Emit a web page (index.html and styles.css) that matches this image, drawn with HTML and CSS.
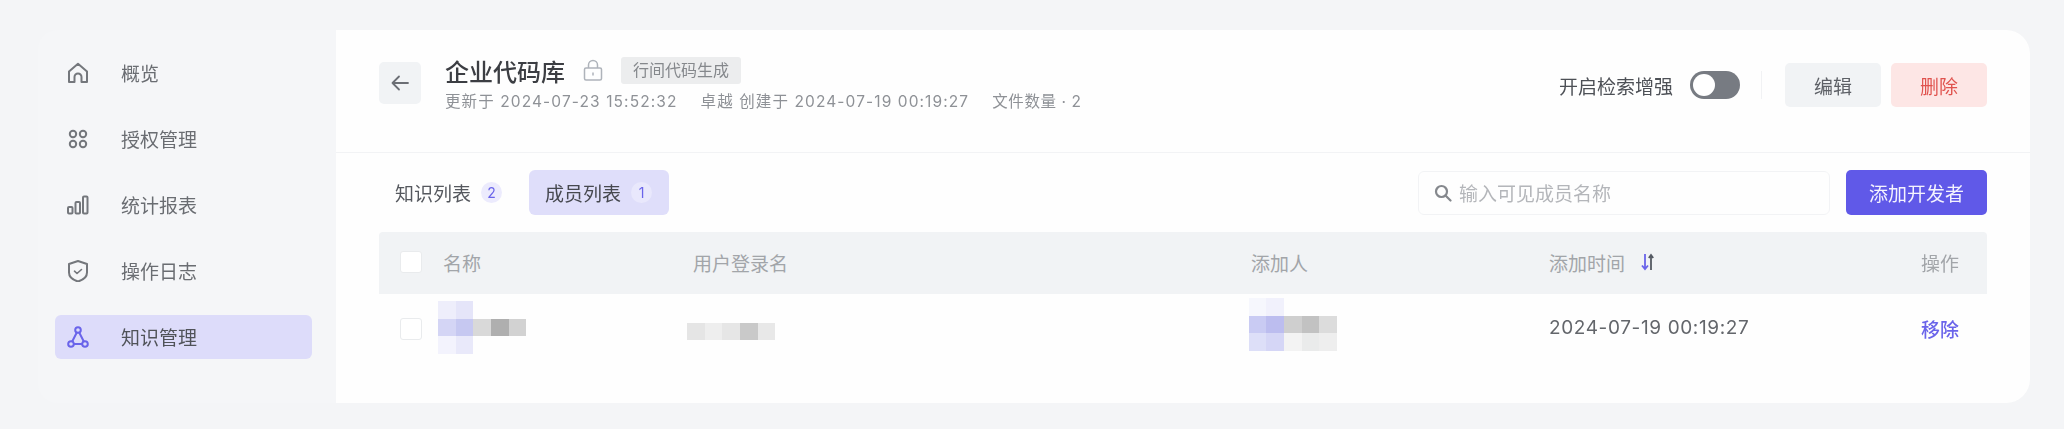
FILE: index.html
```html
<!DOCTYPE html>
<html lang="zh-CN">
<head>
    <meta charset="UTF-8">
    <meta name="viewport" content="width=device-width, initial-scale=1.0">
    <title>企业代码库</title>
    <link rel="stylesheet" href="styles.css">
</head>
<body>
    <div class="app">
        <aside class="sidebar">
            <div class="nav-item">
                <svg class="nav-icon" viewBox="0 0 22 22" fill="none" stroke="currentColor" stroke-width="2" stroke-linejoin="round"><path d="M2 9.500 11 1.800l9 7.700V20h-5.500v-5a3.500 3.500 0 0 0-7 0v5H2z"/></svg>
                <span>概览</span>
            </div>
            <div class="nav-item">
                <svg class="nav-icon" viewBox="0 0 22 22" fill="none" stroke="currentColor" stroke-width="2"><circle cx="6" cy="6" r="3.200"/><circle cx="16" cy="6" r="3.200"/><circle cx="6" cy="16" r="3.200"/><circle cx="16" cy="16" r="3.200"/></svg>
                <span>授权管理</span>
            </div>
            <div class="nav-item">
                <svg class="nav-icon" viewBox="0 0 22 22" fill="none" stroke="currentColor" stroke-width="2"><rect x="1" y="13" width="4.500" height="6.500" rx="1"/><rect x="8.500" y="8" width="4.500" height="11.500" rx="1"/><rect x="16" y="2.500" width="4.500" height="17" rx="1"/></svg>
                <span>统计报表</span>
            </div>
            <div class="nav-item">
                <svg class="nav-icon" viewBox="0 0 22 22" fill="none" stroke="currentColor" stroke-width="2" stroke-linejoin="round" stroke-linecap="round"><path d="M11 1 20 4v8.500c0 4.500-4 7.500-9 9-5-1.500-9-4.500-9-9V4z"/><path d="m7.500 11.200 2.500 2.300 4.500-4" stroke-width="1.600"/></svg>
                <span>操作日志</span>
            </div>
            <div class="nav-item nav-item-active">
                <svg class="nav-icon" viewBox="0 0 22 22" fill="none" stroke="currentColor" stroke-width="2"><circle cx="11" cy="4" r="2.800"/><circle cx="4" cy="18" r="2.800"/><circle cx="18" cy="18" r="2.800"/><path d="M9.800 6.500 5.200 15.500M12.200 6.500l4.600 9M6.800 18h8.400"/></svg>
                <span>知识管理</span>
            </div>
        </aside>

        <main class="panel">
            <header class="panel-head">
                <button class="back-button">
                    <svg viewBox="0 0 20 20" fill="none" stroke="currentColor" stroke-width="1.800" stroke-linecap="round" stroke-linejoin="round"><path d="M18 10H2.500M9 3.500 2.500 10 9 16.500"/></svg>
                </button>
                <div class="title-block">
                    <div class="title-row">
                        <span class="title">企业代码库</span>
                        <svg class="lock-icon" viewBox="0 0 20 22" fill="none" stroke="currentColor" stroke-width="1.500"><rect x="1.500" y="9" width="17" height="12" rx="1.500"/><path d="M5.500 9V6a4.500 4.500 0 0 1 9 0v3M10 13.500v3"/></svg>
                        <span class="tag">行间代码生成</span>
                    </div>
                    <div class="meta-row">
                        <span class="meta-time">更新于 2024-07-23 15:52:32</span>
                        <span class="meta-time">卓越 创建于 2024-07-19 00:19:27</span>
                        <span>文件数量 · 2</span>
                    </div>
                </div>
                <div class="head-actions">
                    <span class="toggle-label">开启检索增强</span>
                    <span class="toggle"></span>
                    <span class="head-divider"></span>
                    <button class="btn btn-gray">编辑</button>
                    <button class="btn btn-red">删除</button>
                </div>
            </header>

            <div class="toolbar">
                <div class="tab">知识列表 <span class="tab-count">2</span></div>
                <div class="tab tab-active">成员列表 <span class="tab-count">1</span></div>
                <div class="search-box">
                    <svg class="search-icon" viewBox="0 0 18 18" fill="none" stroke="currentColor" stroke-width="2.200" stroke-linecap="round"><circle cx="7.500" cy="7.500" r="5.500"/><path d="m12 12 4.500 4.500"/></svg>
                    <span>输入可见成员名称</span>
                </div>
                <button class="btn btn-primary">添加开发者</button>
            </div>

            <div class="table">
                <div class="table-row table-head">
                    <span class="checkbox"></span>
                    <span>名称</span>
                    <span>用户登录名</span>
                    <span>添加人</span>
                    <span class="sort-cell">添加时间
                        <svg class="sort-icon" viewBox="0 0 14 18" fill="none" stroke-width="1.800"><path d="M4 1v15M1 12.500 4 16l3-3.500" stroke="#6a64ea"/><path d="M10 17V2M7.800 5 10 2l2.200 3" stroke="#555a63"/></svg>
                    </span>
                    <span class="cell-op">操作</span>
                </div>
                <div class="table-row table-body">
                    <span class="checkbox"></span>
                    <svg class="mosaic mosaic-name" width="88" height="53" viewBox="0 0 88 53">
                        <rect x="0" y="0" width="18" height="18" fill="#eeeefb"/><rect x="18" y="0" width="17" height="18" fill="#e5e5f9"/>
                        <rect x="0" y="18" width="18" height="17" fill="#d4d5f5"/><rect x="18" y="18" width="17" height="17" fill="#c6c8f1"/>
                        <rect x="35" y="18" width="18" height="17" fill="#d9d9d9"/><rect x="53" y="18" width="18" height="17" fill="#afafaf"/><rect x="71" y="18" width="17" height="17" fill="#d2d2d2"/>
                        <rect x="0" y="35" width="18" height="18" fill="#f3f3fd"/><rect x="18" y="35" width="17" height="18" fill="#e9e9fa"/>
                    </svg>
                    <svg class="mosaic mosaic-login" width="88" height="17" viewBox="0 0 88 17">
                        <rect x="0" y="0" width="18" height="17" fill="#e5e5e5"/><rect x="18" y="0" width="17" height="17" fill="#eeeeee"/><rect x="35" y="0" width="18" height="17" fill="#e6e6e6"/><rect x="53" y="0" width="18" height="17" fill="#c9c9c9"/><rect x="71" y="0" width="17" height="17" fill="#e8e8e8"/>
                    </svg>
                    <svg class="mosaic mosaic-adder" width="88" height="53" viewBox="0 0 88 53">
                        <rect x="0" y="0" width="17" height="18" fill="#f6f7fd"/><rect x="17" y="0" width="18" height="18" fill="#f1f1fc"/>
                        <rect x="0" y="18" width="17" height="17" fill="#c9cbf3"/><rect x="17" y="18" width="18" height="17" fill="#bcbdef"/>
                        <rect x="35" y="18" width="18" height="17" fill="#cfcfcf"/><rect x="53" y="18" width="17" height="17" fill="#c2c2c2"/><rect x="70" y="18" width="18" height="17" fill="#dcdcdc"/>
                        <rect x="0" y="35" width="17" height="18" fill="#dddff8"/><rect x="17" y="35" width="18" height="18" fill="#d5d6f6"/>
                        <rect x="35" y="35" width="18" height="18" fill="#f3f3f3"/><rect x="53" y="35" width="17" height="18" fill="#eaebeb"/><rect x="70" y="35" width="18" height="18" fill="#eeeeee"/>
                    </svg>
                    <span class="cell-time">2024-07-19 00:19:27</span>
                    <span class="cell-op cell-remove">移除</span>
                </div>
            </div>
        </main>
    </div>
</body>
</html>
```

FILE: styles.css
```css
/* Global Styles */
body {
    margin: 0;
    height: 429px;
    overflow: hidden;
    background: #f4f5f7;
    font-family: 'Inter', 'Noto Sans CJK SC', sans-serif;
    font-size: 19px;
    color: #55585e;
}

button {
    font-family: inherit;
    border: none;
    padding: 0;
}

.app {
    display: flex;
    width: 1992px;
    height: 373px;
    margin: 30px 0 0 38px;
}

/* Sidebar */
.sidebar {
    width: 298px;
    box-sizing: border-box;
    padding: 21px 24px 0 17px;
    display: flex;
    flex-direction: column;
    gap: 22px;
    background: #f5f6f8;
    border-radius: 20px 0 0 20px;
    filter: blur(0.6px);
}

.nav-item {
    height: 44px;
    display: flex;
    align-items: center;
    gap: 32px;
    padding-left: 12px;
    border-radius: 6px;
    color: #6a6d72;
    line-height: 24px;
}

.nav-item span {
    margin-top: 3px;
}

.nav-item-active {
    background: #dddcfa;
    color: #505359;
}

.nav-item-active .nav-icon {
    color: #6a64ea;
}

.nav-icon {
    width: 22px;
    height: 22px;
    color: #74777c;
}

/* Main panel */
.panel {
    flex: 1;
    background: #fefefe;
    border-radius: 0 24px 24px 0;
    overflow: hidden;
}

.panel-head {
    height: 123px;
    box-sizing: border-box;
    padding: 32px 43px 0;
    display: flex;
    align-items: flex-start;
    gap: 24px;
    border-bottom: 1px solid #f2f3f5;
    filter: blur(0.6px);
}

.back-button {
    width: 42px;
    height: 42px;
    border-radius: 5px;
    background: #f1f3f5;
    color: #6b6e74;
    display: flex;
    align-items: center;
    justify-content: center;
}

.back-button svg {
    width: 20px;
    height: 20px;
}

.title-block {
    display: flex;
    flex-direction: column;
    margin-top: -6px;
}

.title-row {
    display: flex;
    align-items: center;
    height: 28px;
}

.title {
    font-size: 24px;
    font-weight: 500;
    color: #3c3e43;
}

.lock-icon {
    width: 20px;
    height: 22px;
    margin-left: 18px;
    color: #aeb3ba;
}

.tag {
    margin-left: 18px;
    height: 27px;
    width: 120px;
    text-align: center;
    line-height: 27px;
    font-size: 16px;
    color: #85888c;
    background: #ecedee;
    border-radius: 3px;
}

.meta-row {
    display: flex;
    gap: 23px;
    margin-top: 7px;
    font-size: 15.5px;
    line-height: 22px;
    color: #8e9196;
    letter-spacing: 0.6px;
    white-space: nowrap;
}

.meta-time {
    letter-spacing: 1.1px;
}

.head-actions {
    margin-left: auto;
    display: flex;
    align-items: center;
    height: 44px;
    margin-top: 1px;
}

.toggle-label {
    color: #4d5056;
}

.toggle {
    width: 50px;
    height: 28px;
    margin-left: 17px;
    box-sizing: border-box;
    padding: 3px;
    border-radius: 14px;
    background: #777b82;
}

.toggle::before {
    content: "";
    display: block;
    width: 22px;
    height: 22px;
    border-radius: 50%;
    background: #fff;
}

.head-divider {
    width: 1px;
    height: 28px;
    margin: 0 23px 0 21px;
    background: #f1f2f4;
}

.btn {
    height: 44px;
    width: 96px;
    font-size: 19px;
    border-radius: 5px;
}

.btn-gray {
    background: #f1f3f5;
    color: #5d6066;
}

.btn-red {
    margin-left: 10px;
    background: #fde6e5;
    color: #e0534e;
}

.btn-primary {
    width: 141px;
    height: 45px;
    margin-left: 16px;
    background: #6059e8;
    color: #f4f3fe;
}

/* Tabs and search */
.toolbar {
    display: flex;
    align-items: center;
    height: 45px;
    padding: 0 43px;
    margin-top: 17px;
    filter: blur(0.6px);
}

.tab {
    display: flex;
    align-items: center;
    height: 45px;
    gap: 10px;
    padding: 0 16px;
    border-radius: 6px;
    color: #55585e;
    white-space: nowrap;
}

.tab-active {
    margin-left: 11px;
    padding-right: 17px;
    background: #dfdefa;
    color: #46484f;
}

.tab-count {
    width: 21px;
    height: 21px;
    border-radius: 50%;
    background: #ecebfd;
    color: #6a64ea;
    font-size: 14px;
    line-height: 21px;
    text-align: center;
}

.tab-active .tab-count {
    background: #e9e8fc;
}

.search-box {
    margin-left: auto;
    width: 412px;
    height: 44px;
    box-sizing: border-box;
    display: flex;
    align-items: center;
    gap: 7px;
    padding-left: 15px;
    border: 1px solid #f2f3f5;
    border-radius: 6px;
    color: #b4b6ba;
}

.search-icon {
    width: 18px;
    height: 18px;
    color: #85888d;
}

/* Table */
.table {
    margin: 17px 43px 0;
}

.table-row {
    display: grid;
    grid-template-columns: 64px 250px 558px 298px 1fr 100px;
    align-items: center;
}

.table-head {
    height: 62px;
    background: #f1f3f5;
    border-radius: 4px 4px 0 0;
    color: #a2a5a9;
    filter: blur(0.6px);
    padding-bottom: 2px;
    box-sizing: border-box;
}

.table-body {
    height: 70px;
}

.table-row .checkbox {
    width: 22px;
    height: 22px;
    box-sizing: border-box;
    margin-left: 21px;
    background: #fff;
    border: 1px solid #e9ebed;
    border-radius: 3px;
}

.sort-cell {
    display: flex;
    align-items: center;
    gap: 16px;
}

.sort-icon {
    width: 14px;
    height: 18px;
}

.cell-op {
    text-align: right;
    padding-right: 28px;
}

.cell-remove {
    color: #6a64ea;
    font-weight: 500;
    margin-top: -1px;
    filter: blur(0.6px);
}

.cell-time {
    color: #63666b;
    white-space: nowrap;
    letter-spacing: 0.62px;
    margin-top: -4px;
    filter: blur(0.6px);
}

.mosaic {
    display: block;
}

.mosaic-name {
    margin: -3px 0 0 -5px;
}

.mosaic-login {
    margin: 4px 0 0 -6px;
}

.mosaic-adder {
    margin: -9px 0 0 -2px;
}
```
